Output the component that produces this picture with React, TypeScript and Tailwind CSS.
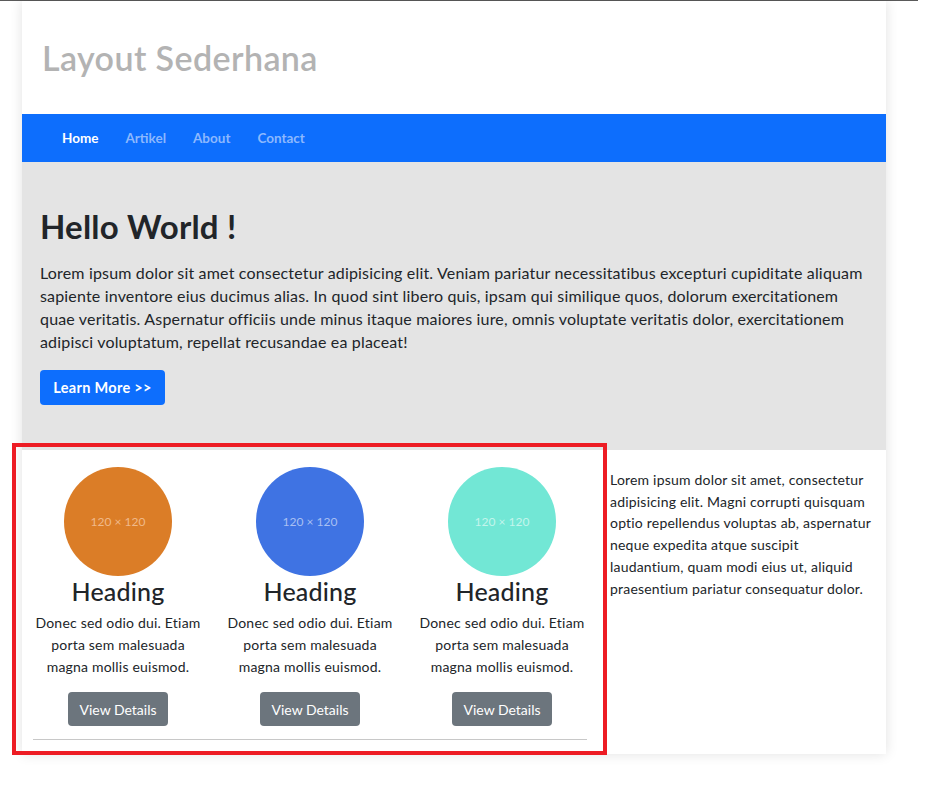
import React from "react";

const cols = [
  { color: "bg-[#db7d27]", text: "text-[#f0b98a]" },
  { color: "bg-[#3f73e3]", text: "text-[#a9c0f2]" },
  { color: "bg-[#72e7d5]", text: "text-[#c3f5ec]" },
];

export default function App() {
  return (
    <div className="relative min-h-screen bg-white" style={{ fontFamily: 'Lato, "Liberation Sans", Arial, sans-serif' }}>
      <div className="h-px w-[918px] bg-[#5a5a5a]" />
      <div className="ml-[22px] w-[864px] shadow-[0_0_12px_rgba(0,0,0,0.12)]">
        <header className="flex h-[113px] items-center bg-white px-[20px]">
          <h1 className="text-[34px] font-semibold tracking-[0.4px] text-[#b3b3b3]">Layout Sederhana</h1>
        </header>
        <nav className="flex h-[48px] items-center gap-[27px] bg-[#0d6efd] px-[40px] text-[13.5px] font-bold">
          <a className="text-white">Home</a>
          <a className="text-[#8cb8fe]">Artikel</a>
          <a className="text-[#8cb8fe]">About</a>
          <a className="text-[#8cb8fe]">Contact</a>
        </nav>
        <section className="bg-[#e4e4e4] pb-[45px] pl-[18px] pr-[20px] pt-[45px] text-[#212529]">
          <h2 className="text-[33px] font-bold leading-[38px] tracking-[0.2px]">Hello World !</h2>
          <p className="mt-[16px] whitespace-nowrap text-[16px] leading-[23px] tracking-[0.17px]">
            Lorem ipsum dolor sit amet consectetur adipisicing elit. Veniam pariatur necessitatibus excepturi cupiditate aliquam
            <br />
            sapiente inventore eius ducimus alias. In quod sint libero quis, ipsam qui similique quos, dolorum exercitationem
            <br />
            quae veritatis. Aspernatur officiis unde minus itaque maiores iure, omnis voluptate veritatis dolor, exercitationem
            <br />
            adipisci voluptatum, repellat recusandae ea placeat!
          </p>
          <button className="mt-[17px] flex h-[35px] w-[125px] items-center justify-center rounded-[4px] bg-[#0d6efd] text-[14.5px] font-bold tracking-[0.3px] text-white">
            Learn More &gt;&gt;
          </button>
        </section>
        <div className="flex bg-white">
          <div className="w-[576px] pb-[14px] pt-[17px]">
            <div className="grid grid-cols-3">
              {cols.map((c, i) => (
                <div key={i} className="flex flex-col items-center text-center">
                  <div className={`flex h-[109px] w-[108px] items-center justify-center rounded-full ${c.color}`}>
                    <span className={`text-[12px] ${c.text}`}>120 × 120</span>
                  </div>
                  <h3 className="text-[25px] font-medium leading-[30px] tracking-[0.2px] text-[#212529]">Heading</h3>
                  <p className="mt-[6px] whitespace-nowrap text-[14px] leading-[22px] tracking-[0.2px] text-[#212529]">
                    Donec sed odio dui. Etiam
                    <br />
                    porta sem malesuada
                    <br />
                    magna mollis euismod.
                  </p>
                  <button className="mt-[14px] h-[34px] w-[100px] rounded-[4px] bg-[#6c757d] text-[14px] text-white">
                    View Details
                  </button>
                </div>
              ))}
            </div>
            <div className="mx-[11px] mt-[13px] h-px bg-[#c8c8c8]" />
          </div>
          <div className="w-[288px] px-[12px] pt-[19px]">
            <p className="whitespace-nowrap text-[14px] leading-[21.7px] tracking-[0.2px] text-[#212529]">
              Lorem ipsum dolor sit amet, consectetur
              <br />
              adipisicing elit. Magni corrupti quisquam
              <br />
              optio repellendus voluptas ab, aspernatur
              <br />
              neque expedita atque suscipit
              <br />
              laudantium, quam modi eius ut, aliquid
              <br />
              praesentium pariatur consequatur dolor.
            </p>
          </div>
        </div>
      </div>
      <div className="pointer-events-none absolute left-[12px] top-[443px] h-[312px] w-[595px] border-[4px] border-[#ed1c24]" />
    </div>
  );
}
